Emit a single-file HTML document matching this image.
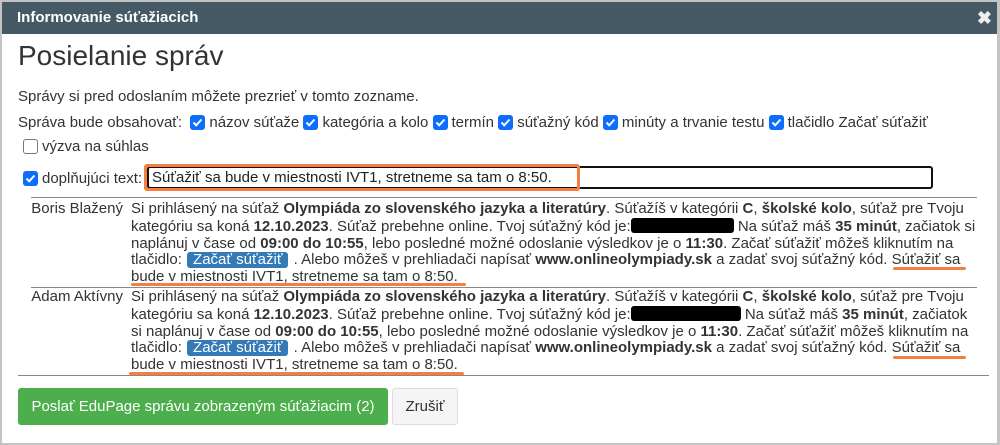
<!DOCTYPE html>
<html><head><meta charset="utf-8"><style>
*{box-sizing:border-box;margin:0;padding:0}
body{width:1000px;height:445px;overflow:hidden;background:#fff;font-family:"Liberation Sans",Arial,sans-serif;color:#333;font-size:15px;position:relative}
.frame{position:absolute;left:0;top:0;width:1000px;height:445px;border:2px solid #c4c4c4;border-right-width:3px}
.hdr{position:absolute;left:2px;top:2px;width:995px;height:32px;background:#465a66;color:#fff;font-weight:bold;font-size:15px;line-height:32px;padding-left:15px}
.x{position:absolute;right:5px;top:0;font-size:18px;color:#eee}
.a{position:absolute;white-space:nowrap}
.cb{display:inline-block;width:15px;height:15px;border-radius:3px;background:#0d6efd;vertical-align:-3px;position:relative;margin-right:4px}
.cb svg{position:absolute;left:2px;top:2px}
.cb.off{background:#fff;border:1px solid #777}
.msg{position:absolute;left:131px;line-height:16.8px;white-space:nowrap}
.nm{position:absolute;right:877px;white-space:nowrap;line-height:16.8px}
.btn{display:inline-block;background:#337ab7;color:#fff;padding:0 6px;border-radius:3px;line-height:16px;margin:0 1px}
.red{display:inline-block;background:#000;height:15px;border-radius:3px;vertical-align:-2px}
.ul{position:absolute;height:3px;background:#f47f3f;border-radius:2px}
</style></head><body>
<div class="frame"></div>
<div class="hdr">Informovanie súťažiacich<span class="x">✖</span></div>
<div class="a" style="left:18px;top:40px;font-size:28px;color:#333">Posielanie správ</div>
<div class="a" style="left:18px;top:88px">Správy si pred odoslaním môžete prezrieť v tomto zozname.</div>
<div class="a" style="left:18px;top:114px">Správa bude obsahovať:&nbsp;
<span class="cb"><svg width="11" height="11" viewBox="0 0 11 11"><path d="M1.5 5.5l2.7 2.8L9.5 2.5" stroke="#fff" stroke-width="2" fill="none"/></svg></span>názov súťaže
<span class="cb"><svg width="11" height="11" viewBox="0 0 11 11"><path d="M1.5 5.5l2.7 2.8L9.5 2.5" stroke="#fff" stroke-width="2" fill="none"/></svg></span>kategória a kolo
<span class="cb"><svg width="11" height="11" viewBox="0 0 11 11"><path d="M1.5 5.5l2.7 2.8L9.5 2.5" stroke="#fff" stroke-width="2" fill="none"/></svg></span>termín
<span class="cb"><svg width="11" height="11" viewBox="0 0 11 11"><path d="M1.5 5.5l2.7 2.8L9.5 2.5" stroke="#fff" stroke-width="2" fill="none"/></svg></span>súťažný kód
<span class="cb"><svg width="11" height="11" viewBox="0 0 11 11"><path d="M1.5 5.5l2.7 2.8L9.5 2.5" stroke="#fff" stroke-width="2" fill="none"/></svg></span>minúty a trvanie testu
<span class="cb"><svg width="11" height="11" viewBox="0 0 11 11"><path d="M1.5 5.5l2.7 2.8L9.5 2.5" stroke="#fff" stroke-width="2" fill="none"/></svg></span>tlačidlo Začať súťažiť</div>
<div class="a" style="left:23px;top:138px"><span class="cb off"></span>výzva na súhlas</div>
<div class="a" style="left:23px;top:170px"><span class="cb"><svg width="11" height="11" viewBox="0 0 11 11"><path d="M1.5 5.5l2.7 2.8L9.5 2.5" stroke="#fff" stroke-width="2" fill="none"/></svg></span>doplňujúci text:</div>
<div style="position:absolute;left:147px;top:166px;width:786px;height:23px;border:2px solid #111;border-radius:3px"></div>
<div style="position:absolute;left:144px;top:164px;width:436px;height:27px;border:3px solid #f47f3f;border-radius:3px"></div>
<div class="a" style="left:152px;top:169px;font-size:15px;color:#222">Súťažiť sa bude v miestnosti IVT1, stretneme sa tam o 8:50.</div>
<div style="position:absolute;left:31px;top:197px;width:946px;height:1px;background:#888"></div>
<div class="nm" style="top:201px">Boris Blažený</div>
<div class="msg" style="top:201px">Si prihlásený na súťaž <b>Olympiáda zo slovenského jazyka a literatúry</b>. Súťažíš v kategórii <b>C</b>, <b>školské kolo</b>, súťaž pre Tvoju<br>kategóriu sa koná <b>12.10.2023</b>. Súťaž prebehne online. Tvoj súťažný kód je:<span class="red" style="width:103px"></span> Na súťaž máš <b>35 minút</b>, začiatok si<br>naplánuj v čase od <b>09:00 do 10:55</b>, lebo posledné možné odoslanie výsledkov je o <b>11:30</b>. Začať súťažiť môžeš kliknutím na<br>tlačidlo: <span class="btn">Začať súťažiť</span> . Alebo môžeš v prehliadači napísať <b>www.onlineolympiady.sk</b> a zadať svoj súťažný kód. Súťažiť sa<br>bude v miestnosti IVT1, stretneme sa tam o 8:50.</div>
<div class="ul" style="left:131px;top:283px;width:335px"></div>
<div class="ul" style="left:893px;top:267px;width:73px"></div>
<div style="position:absolute;left:31px;top:287px;width:946px;height:1px;background:#888"></div>
<div class="nm" style="top:289px">Adam Aktívny</div>
<div class="msg" style="top:289px">Si prihlásený na súťaž <b>Olympiáda zo slovenského jazyka a literatúry</b>. Súťažíš v kategórii <b>C</b>, <b>školské kolo</b>, súťaž pre Tvoju<br>kategóriu sa koná <b>12.10.2023</b>. Súťaž prebehne online. Tvoj súťažný kód je:<span class="red" style="width:110px"></span> Na súťaž máš <b>35 minút</b>, začiatok<br>si naplánuj v čase od <b>09:00 do 10:55</b>, lebo posledné možné odoslanie výsledkov je o <b>11:30</b>. Začať súťažiť môžeš kliknutím na<br>tlačidlo: <span class="btn">Začať súťažiť</span> . Alebo môžeš v prehliadači napísať <b>www.onlineolympiady.sk</b> a zadať svoj súťažný kód. Súťažiť sa<br>bude v miestnosti IVT1, stretneme sa tam o 8:50.</div>
<div class="ul" style="left:129px;top:372px;width:335px"></div>
<div class="ul" style="left:893px;top:356px;width:73px"></div>
<div style="position:absolute;left:18px;top:375px;width:971px;height:1px;background:#888"></div>
<div style="position:absolute;left:18px;top:388px;width:370px;height:37px;background:#4cae4c;border-radius:3px;color:#fff;font-size:15px;line-height:37px;text-align:center">Poslať EduPage správu zobrazeným súťažiacim (2)</div>
<div style="position:absolute;left:392px;top:388px;width:66px;height:37px;background:#f5f5f7;border:1px solid #ddd;border-radius:3px;color:#333;font-size:15px;line-height:35px;text-align:center">Zrušiť</div>
</body></html>
